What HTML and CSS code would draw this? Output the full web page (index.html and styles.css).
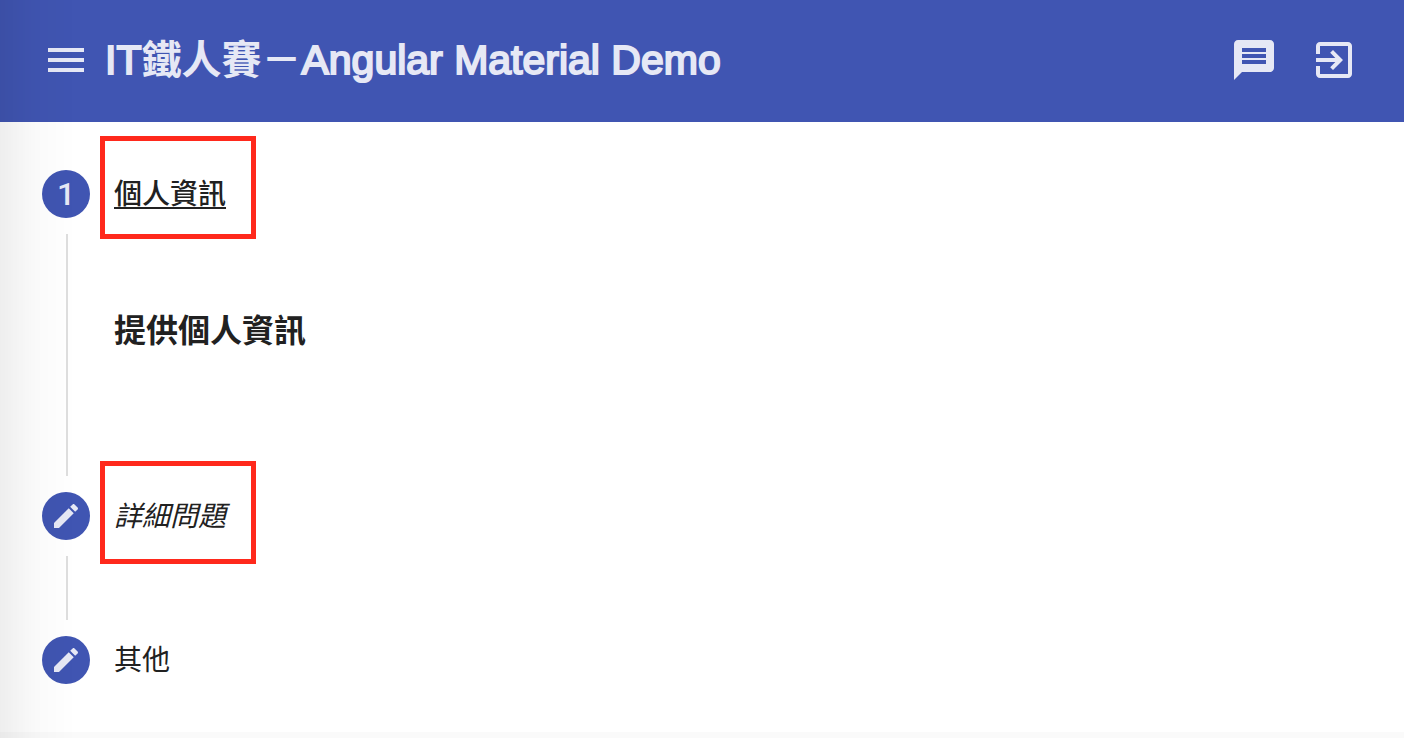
FILE: index.html
```html
<!DOCTYPE html>
<html lang="zh-Hant">
<head>
<meta charset="utf-8">
<meta name="viewport" content="width=device-width, initial-scale=1">
<title>IT鐵人賽－Angular Material Demo</title>
<link rel="stylesheet" href="styles.css">
</head>
<body>
<header class="toolbar">
  <button class="icon-button" type="button" aria-label="Menu">
    <svg viewBox="0 0 24 24"><path d="M3 18h18v-2H3v2zm0-5h18v-2H3v2zm0-7v2h18V6H3z"/></svg>
  </button>
  <h1 class="title"><span class="latin">IT</span>鐵人賽－<span class="latin">Angular Material Demo</span></h1>
  <div class="actions">
    <button class="icon-button" type="button" aria-label="Messages">
      <svg viewBox="0 0 24 24"><path d="M20 2H4c-1.100 0-1.990.9-1.990 2L2 22l4-4h14c1.100 0 2-.9 2-2V4c0-1.100-.9-2-2-2zm-2 12H6v-2h12v2zm0-3H6V9h12v2zm0-3H6V6h12v2z"/></svg>
    </button>
    <button class="icon-button" type="button" aria-label="Exit">
      <svg viewBox="0 0 24 24"><path d="M10.090 15.590L11.500 17l5-5-5-5-1.410 1.410L12.670 11H3v2h9.670l-2.580 2.590zM19 3H5c-1.110 0-2 .9-2 2v4h2V5h14v14H5v-4H3v4c0 1.100.89 2 2 2h14c1.100 0 2-.9 2-2V5c0-1.100-.9-2-2-2z"/></svg>
    </button>
  </div>
</header>
<main>
  <ol class="stepper">
    <li class="step">
      <button class="step-header" type="button" aria-expanded="true">
        <span class="step-icon">1</span>
        <span class="step-label highlight highlight-raised"><span class="label-current">個人資訊</span></span>
      </button>
      <section class="step-content">
        <h2 class="content-title">提供個人資訊</h2>
      </section>
    </li>
    <li class="step">
      <button class="step-header" type="button">
        <span class="step-icon"><svg viewBox="0 0 24 24"><path d="M3 17.250V21h3.750L17.810 9.940l-3.750-3.750L3 17.250zM20.710 7.040c.39-.39.39-1.020 0-1.410l-2.340-2.340c-.39-.39-1.020-.39-1.410 0l-1.830 1.830 3.750 3.750 1.830-1.830z"/></svg></span>
        <span class="step-label highlight"><em>詳細問題</em></span>
      </button>
    </li>
    <li class="step">
      <button class="step-header" type="button">
        <span class="step-icon"><svg viewBox="0 0 24 24"><path d="M3 17.250V21h3.750L17.810 9.940l-3.750-3.750L3 17.250zM20.710 7.040c.39-.39.39-1.020 0-1.410l-2.340-2.340c-.39-.39-1.020-.39-1.410 0l-1.830 1.830 3.750 3.750 1.830-1.830z"/></svg></span>
        <span class="step-label">其他</span>
      </button>
    </li>
  </ol>
</main>
</body>
</html>
```
FILE: styles.css
```css
* {
  box-sizing: border-box;
}

body {
  margin: 0;
  min-height: 100vh;
  background: #fafafa;
  color: #212121;
  font-family: "Liberation Sans", "Noto Sans CJK TC", sans-serif;
}

body::before {
  content: "";
  position: fixed;
  inset: 0 auto 0 0;
  z-index: 1;
  width: 76px;
  background: linear-gradient(to right, rgba(0, 0, 0, 0.065), rgba(0, 0, 0, 0.02) 36px, transparent);
  pointer-events: none;
}

button {
  padding: 0;
  border: 0;
  background: none;
  color: inherit;
  font: inherit;
  text-align: left;
  cursor: pointer;
}

svg {
  display: block;
  fill: currentColor;
}

.toolbar {
  display: flex;
  align-items: center;
  gap: 15px;
  padding: 36px 46px 38px 42px;
  background: #4055b2;
  color: #e6e8f5;
}

.icon-button,
.icon-button svg {
  display: block;
  width: 48px;
  height: 48px;
}

.title {
  margin: 0;
  font-size: 40px;
  font-weight: 700;
  line-height: 48px;
}

.latin {
  font-size: 41px;
  font-weight: 400;
  -webkit-text-stroke: 2px currentColor;
}

.actions {
  display: flex;
  gap: 32px;
  margin-left: auto;
}

.stepper {
  margin: 0;
  padding: 0;
  background: #fff;
  list-style: none;
}

.step {
  position: relative;
}

/* Connector between two step icons */
.step:not(:last-child)::after {
  content: "";
  position: absolute;
  top: 112px;
  bottom: -32px;
  left: 66px;
  width: 2px;
  background: #dedede;
}

.step-header {
  display: flex;
  align-items: center;
  gap: 24px;
  width: 100%;
  padding: 48px 42px;
}

.step-icon {
  display: flex;
  align-items: center;
  justify-content: center;
  width: 48px;
  height: 48px;
  border-radius: 50%;
  background: #4055b2;
  color: #e6e8f5;
  font-family: Roboto, "Liberation Sans", sans-serif;
  font-size: 32px;
  font-weight: 500;
}

.step-icon svg {
  width: 32px;
  height: 32px;
}

.step-label {
  position: relative;
  padding-top: 2px;
  font-size: 28px;
  line-height: 40px;
}

.label-current {
  font-weight: 500;
  text-decoration: underline;
  text-decoration-thickness: 2px;
  text-underline-offset: 3px;
  text-decoration-skip-ink: none;
}

.highlight::after {
  content: "";
  position: absolute;
  inset: -34px -30px -27px -14px;
  border: 5px solid #ff291c;
}

.highlight-raised::after {
  inset: -37px -30px -24px -14px;
}

.step-content {
  padding: 41px 42px 89px 114px;
}

.content-title {
  margin: 0;
  font-size: 32px;
  font-weight: 700;
  line-height: 48px;
}
```
